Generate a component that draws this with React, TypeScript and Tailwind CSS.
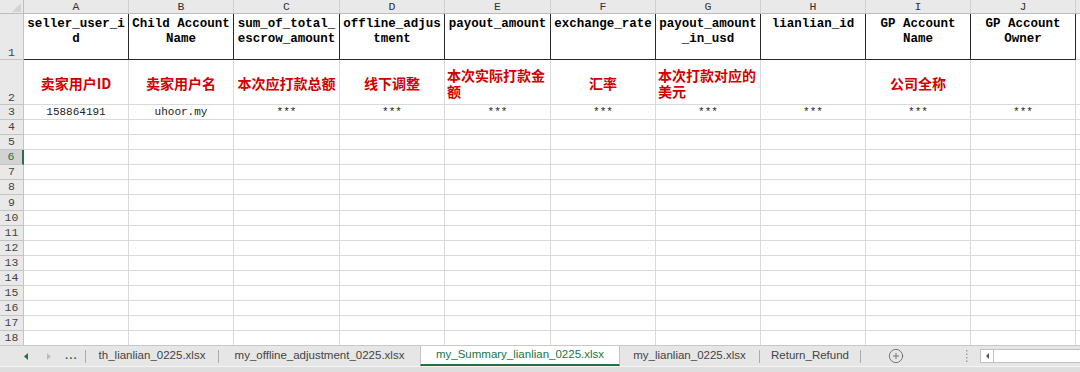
import React from "react";
import { CirclePlus } from "lucide-react";

const mono = "font-['Liberation_Mono','Noto_Sans_CJK_SC',monospace]";

const columns = [
  { letter: "A", width: "w-[105px]" },
  { letter: "B", width: "w-[105px]" },
  { letter: "C", width: "w-[106px]" },
  { letter: "D", width: "w-[105px]" },
  { letter: "E", width: "w-[106px]" },
  { letter: "F", width: "w-[105px]" },
  { letter: "G", width: "w-[105px]" },
  { letter: "H", width: "w-[105px]" },
  { letter: "I", width: "w-[105px]" },
  { letter: "J", width: "w-[105px]" },
];

const headers = [
  "seller_user_id",
  "Child Account Name",
  "sum_of_total_escrow_amount",
  "offline_adjustment",
  "payout_amount",
  "exchange_rate",
  "payout_amount_in_usd",
  "lianlian_id",
  "GP Account Name",
  "GP Account Owner",
];

const notes = [
  { text: "卖家用户ID", align: "text-center" },
  { text: "卖家用户名", align: "text-center" },
  { text: "本次应打款总额", align: "text-center" },
  { text: "线下调整", align: "text-center" },
  { text: "本次实际打款金额", align: "text-left" },
  { text: "汇率", align: "text-center" },
  { text: "本次打款对应的美元", align: "text-left" },
  { text: "", align: "text-center" },
  { text: "公司全称", align: "text-center" },
  { text: "", align: "text-center" },
];

const values = ["158864191", "uhoor.my", "***", "***", "***", "***", "***", "***", "***", "***"];

const emptyRows = [
  { n: 4, h: "h-[15px]" },
  { n: 5, h: "h-[15px]" },
  { n: 6, h: "h-[15px]", selected: true },
  { n: 7, h: "h-[15px]" },
  { n: 8, h: "h-[15px]" },
  { n: 9, h: "h-[16px]" },
  { n: 10, h: "h-[15px]" },
  { n: 11, h: "h-[15px]" },
  { n: 12, h: "h-[15px]" },
  { n: 13, h: "h-[15px]" },
  { n: 14, h: "h-[15px]" },
  { n: 15, h: "h-[15px]" },
  { n: 16, h: "h-[15px]" },
  { n: 17, h: "h-[15px]" },
  { n: 18, h: "h-[15px]" },
];

const rowHead = `w-[24px] shrink-0 bg-[#e9e9e9] border-r border-b border-[#c4c4c4] text-[11.5px] text-[#444] ${mono}`;

function Separator() {
  return <div className="w-[1px] h-[13px] bg-[#ababab] shrink-0" />;
}

function Tab({ label, width }: { label: string; width: string }) {
  return (
    <div className={`${width} shrink-0 h-full flex items-center justify-center text-[#444]`}>{label}</div>
  );
}

export default function App() {
  return (
    <div className="w-[1080px] h-[372px] overflow-hidden bg-white flex flex-col">
      <div className="h-[345px] overflow-hidden shrink-0">
        {/* column letters */}
        <div className="flex h-[14px]">
          <div className="w-[24px] shrink-0 bg-[#e9e9e9] border-r border-b border-[#bcbcbc] flex items-end justify-end">
            <svg width="12" height="11" viewBox="0 0 12 11">
              <polygon points="10,1 10,10 1,10" fill="#d3d3d3" />
            </svg>
          </div>
          {columns.map((c) => (
            <div
              key={c.letter}
              className={`${c.width} shrink-0 bg-[#e9e9e9] border-r border-b border-r-[#d0d0d0] border-b-[#bcbcbc] flex items-center justify-center text-[11.5px] leading-none text-[#333] ${mono}`}
            >
              {c.letter}
            </div>
          ))}
          <div className="flex-1 bg-[#e9e9e9] border-b border-[#bcbcbc]" />
        </div>

        {/* row 1 */}
        <div className="flex h-[46px]">
          <div className={`${rowHead} flex items-end justify-center pb-[1px] leading-none`}>1</div>
          {columns.map((c, i) => (
            <div
              key={c.letter}
              className={`${c.width} shrink-0 border-r border-b border-[#2a2a2a] px-[2px] pt-[3px] text-center text-[12.5px] leading-[15px] font-bold text-black [overflow-wrap:anywhere] ${mono}`}
            >
              {headers[i]}
            </div>
          ))}
          <div className="flex-1 border-b border-[#dadada]" />
        </div>

        {/* row 2 */}
        <div className="flex h-[45px]">
          <div className={`${rowHead} flex items-end justify-center pb-[1px] leading-none`}>2</div>
          {columns.map((c, i) => (
            <div
              key={c.letter}
              className={`${c.width} shrink-0 border-r border-b border-[#dadada] px-[2px] pt-[2px] flex items-center justify-center`}
            >
              <div
                className={`w-full ${notes[i].align} text-[14px] leading-[16px] font-bold text-[#d00000] font-['Noto_Sans_CJK_SC',sans-serif]`}
              >
                {notes[i].text}
              </div>
            </div>
          ))}
          <div className="flex-1 border-b border-[#dadada]" />
        </div>

        {/* row 3 */}
        <div className="flex h-[15px]">
          <div className={`${rowHead} flex items-center justify-center leading-none`}>3</div>
          {columns.map((c, i) => (
            <div
              key={c.letter}
              className={`${c.width} shrink-0 border-r border-b border-[#dadada] flex items-center justify-center text-[11px] leading-none text-[#222] ${mono}`}
            >
              {values[i]}
            </div>
          ))}
          <div className="flex-1 border-b border-[#dadada]" />
        </div>

        {/* empty rows */}
        {emptyRows.map((r) => (
          <div key={r.n} className={`flex ${r.h}`}>
            {r.selected ? (
              <div className={`w-[24px] shrink-0 bg-[#d2d2d2] border-r-2 border-b border-r-[#217346] border-b-[#c4c4c4] flex items-center justify-center text-[11.5px] leading-none text-[#217346] ${mono}`}>
                {r.n}
              </div>
            ) : (
              <div className={`${rowHead} flex items-center justify-center leading-none`}>{r.n}</div>
            )}
            {columns.map((c) => (
              <div key={c.letter} className={`${c.width} shrink-0 border-r border-b border-[#dadada]`} />
            ))}
            <div className="flex-1 border-b border-[#dadada]" />
          </div>
        ))}
      </div>

      {/* sheet tabs */}
      <div className="h-[21px] shrink-0 flex items-stretch bg-[#e6e6e6] border-t border-[#c8c8c8] text-[11.5px] font-['Liberation_Sans',Arial,sans-serif]">
        <div className="w-[85px] shrink-0 flex items-center pl-[24px]">
          <svg width="4" height="7" viewBox="0 0 4 7">
            <polygon points="4,0 4,7 0,3.5" fill="#217346" />
          </svg>
          <svg width="4" height="7" viewBox="0 0 4 7" className="ml-[19px]">
            <polygon points="0,0 0,7 4,3.5" fill="#bdbdbd" />
          </svg>
          <span className="ml-[14px] font-bold text-[#217346] leading-none tracking-[1px]">...</span>
        </div>
        <div className="flex items-center">
          <Separator />
        </div>
        <Tab label="th_lianlian_0225.xlsx" width="w-[132px]" />
        <div className="flex items-center">
          <Separator />
        </div>
        <Tab label="my_offline_adjustment_0225.xlsx" width="w-[201px]" />
        <div className="w-[200px] shrink-0 bg-white border-x border-[#c6c6c6] border-b-2 border-b-[#217346] flex items-center justify-center text-[#217346]">
          my_Summary_lianlian_0225.xlsx
        </div>
        <Tab label="my_lianlian_0225.xlsx" width="w-[139px]" />
        <div className="flex items-center">
          <Separator />
        </div>
        <Tab label="Return_Refund" width="w-[100px]" />
        <div className="flex items-center">
          <Separator />
        </div>
        <div className="w-[99px] shrink-0 flex items-center pl-[27px]">
          <CirclePlus size={16} strokeWidth={1.3} color="#666" />
        </div>
        <div className="w-[20px] shrink-0 flex items-center pl-[6px]">
          <svg width="2" height="12" viewBox="0 0 2 12">
            <rect x="0" y="0" width="1.5" height="1.5" fill="#a0a0a0" />
            <rect x="0" y="3.5" width="1.5" height="1.5" fill="#a0a0a0" />
            <rect x="0" y="7" width="1.5" height="1.5" fill="#a0a0a0" />
            <rect x="0" y="10.5" width="1.5" height="1.5" fill="#a0a0a0" />
          </svg>
        </div>
        <div className="flex-1 flex items-center">
          <div className="flex-1 h-[14px] bg-white border border-r-0 border-[#c2c2c2] flex">
            <div className="w-[13px] border-r border-[#c2c2c2] flex items-center justify-center">
              <svg width="3" height="6" viewBox="0 0 3 6">
                <polygon points="3,0 3,6 0,3" fill="#555" />
              </svg>
            </div>
          </div>
        </div>
      </div>
      <div className="flex-1 bg-[#dedede] border-t border-[#f3f3f3]" />
    </div>
  );
}
